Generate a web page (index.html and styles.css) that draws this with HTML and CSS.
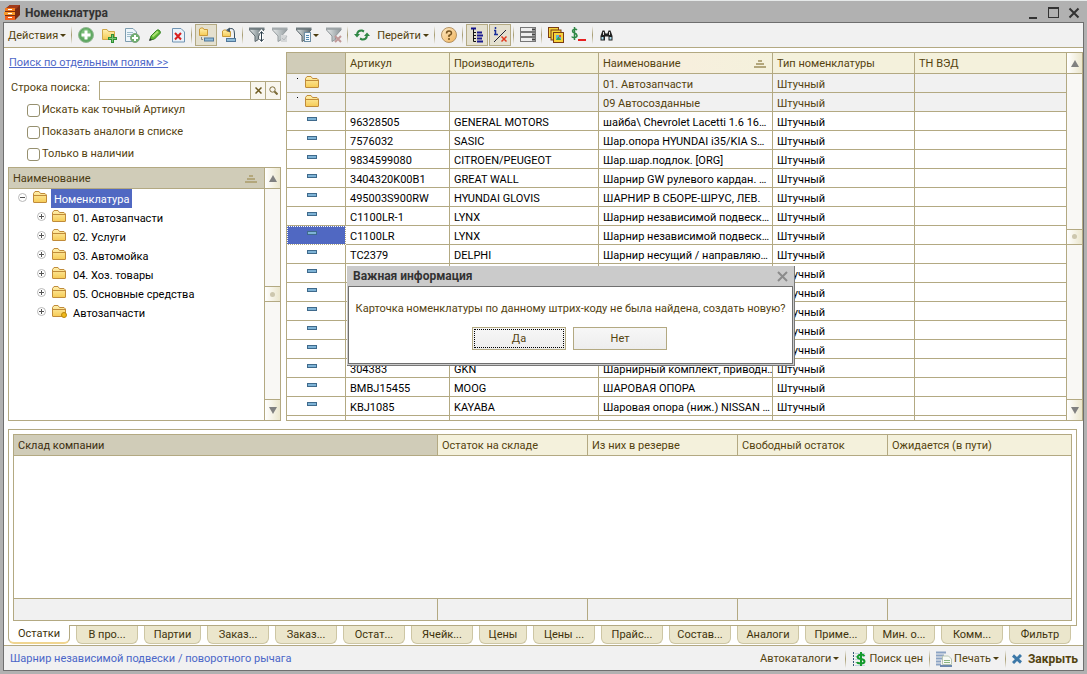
FILE: index.html
```html
<!DOCTYPE html>
<html lang="ru">
<head>
<meta charset="utf-8">
<title>Номенклатура</title>
<link rel="stylesheet" href="styles.css">
</head>
<body>
<svg class="sprite" aria-hidden="true">
  <defs>
    <linearGradient id="gFolder" x1="0" y1="0" x2="0" y2="1"><stop offset="0" stop-color="#fff0ae"/><stop offset="1" stop-color="#f6cb55"/></linearGradient>
    <linearGradient id="gFunnel" x1="0" y1="0" x2="1" y2="0"><stop offset="0" stop-color="#e4e8e8"/><stop offset=".5" stop-color="#9aa5a8"/><stop offset="1" stop-color="#59656a"/></linearGradient>
    <linearGradient id="gHelp" x1="0" y1="0" x2="1" y2="1"><stop offset="0" stop-color="#fdebc8"/><stop offset="1" stop-color="#f0b25a"/></linearGradient>
  </defs>
  <symbol id="folder" viewBox="0 0 16 14"><path d="M1.500 12V3.500L3 1.500H7L8.500 3.500H13L14.500 5V12Q14.500 12.500 14 12.500H2Q1.500 12.500 1.500 12Z" fill="url(#gFolder)" stroke="#c08b3a"/><path d="M1.500 5.500H14" stroke="#c08b3a"/></symbol>
  <symbol id="item" viewBox="0 0 10 5"><rect x=".5" y=".5" width="9" height="3" fill="#7eb3d6" stroke="#3f6a8c"/></symbol>
  <symbol id="plus" viewBox="0 0 9 9"><circle cx="4.500" cy="4.500" r="4" fill="#fff" stroke="#b9b9b9"/><path d="M2 4.500H7M4.500 2V7" stroke="#555"/></symbol>
  <symbol id="minus" viewBox="0 0 9 9"><circle cx="4.500" cy="4.500" r="4" fill="#fff" stroke="#b9b9b9"/><path d="M2 4.500H7" stroke="#555"/></symbol>
  <symbol id="sort" viewBox="0 0 12 8"><path d="M4 1H8M2 4H10M0 7H12" stroke="#b3a77c" stroke-width="2"/></symbol>
  <symbol id="funnel" viewBox="0 0 16 16"><path d="M.5 2V3L6 9V14.500L9.500 12.500V9L15 3V2Z" fill="url(#gFunnel)" stroke="#59656a"/><path d="M0 1.500H15.500" stroke="#717c80" stroke-width="2"/></symbol>
</svg>

<div class="window">
  <header class="titlebar">
    <svg class="app-icon" width="17" height="17" viewBox="0 0 17 17"><path d="M1 5L6 1H16V11L11 16H1Z" fill="#7a2b12"/><path d="M1 5L6 1H16L12 5Z" fill="#a33c1b"/><rect x="1" y="4" width="10" height="3" fill="#f47a1c"/><rect x="0" y="8" width="11" height="3" fill="#f99a2a"/><rect x="1" y="12" width="10" height="4" fill="#f0601a"/><path d="M4 5.500H8M4 9.500H8M4 13.500H8" stroke="#fff"/></svg>
    <h1>Номенклатура</h1>
    <div class="win-buttons">
      <button aria-label="Свернуть"><svg width="12" height="14" viewBox="0 0 12 14"><path d="M1 12H9" stroke="#333" stroke-width="2"/></svg></button>
      <button aria-label="Развернуть"><svg width="12" height="14" viewBox="0 0 12 14"><rect x=".5" y="2.500" width="10" height="9" fill="none" stroke="#333"/><path d="M0 2H11" stroke="#333" stroke-width="2"/></svg></button>
      <button aria-label="Закрыть окно"><svg width="12" height="14" viewBox="0 0 12 14"><path d="M1.500 2.500L10.500 11.500M10.500 2.500L1.500 11.500" stroke="#333" stroke-width="2"/></svg></button>
    </div>
  </header>

  <div class="client">
    <nav class="toolbar">
      <button class="text-btn">Действия<i class="caret"></i></button>
      <i class="sep"></i>
      <button class="icon-btn" aria-label="Добавить"><svg width="16" height="16" viewBox="0 0 16 16"><circle cx="8" cy="8" r="7.500" fill="#5fa862" stroke="#94b894"/><circle cx="8" cy="7" r="5" fill="#7abd78"/><path d="M8 3.500V12.500M3.500 8H12.500" stroke="#fff" stroke-width="3"/></svg></button>
      <button class="icon-btn" aria-label="Новая группа"><svg width="16" height="16" viewBox="0 0 16 16"><path d="M1.500 12.500V2.500H6L7.500 4.500H13.500V12.500Z" fill="url(#gFolder)" stroke="#d0a848"/><path d="M11.500 7V16M7 11.500H16" stroke="#2f8f35" stroke-width="3"/><path d="M11.500 8V15M8 11.500H15" stroke="#79c774"/></svg></button>
      <button class="icon-btn" aria-label="Скопировать"><svg width="16" height="16" viewBox="0 0 16 16"><path d="M1.500 1.500H9L12.500 5V14.500H1.500Z" fill="#eef6fb" stroke="#7d9db0"/><path d="M3 5.500H9M3 7.500H10M3 9.500H8" stroke="#9dbccb"/><circle cx="11" cy="11" r="4.500" fill="#6cb06d" stroke="#82a582"/><path d="M11 8V14M8 11H14" stroke="#fff" stroke-width="2"/></svg></button>
      <button class="icon-btn" aria-label="Изменить"><svg width="16" height="16" viewBox="0 0 16 16"><path d="M3 13L4 9L9.500 3.500Q11 2 12.500 3.500T13 6.500L7.500 12Z" fill="#5fb533" stroke="#33821f"/><path d="M5.500 9.500L11 4.500" stroke="#a9e274" stroke-width="2"/><path d="M2 14L3 11L5 13Z" fill="#333"/></svg></button>
      <button class="icon-btn" aria-label="Удалить"><svg width="16" height="16" viewBox="0 0 16 16"><path d="M2.500 1.500H11L14.500 5V15H2.500Z" fill="#e9f2fa" stroke="#6f93b2"/><path d="M5 6L11 12.500M11 6L5 12.500" stroke="#d92020" stroke-width="2"/></svg></button>
      <i class="sep"></i>
      <button class="icon-btn on" aria-label="Иерархический просмотр"><svg width="16" height="16" viewBox="0 0 16 16"><path d="M1.500 8.500V2L3 1H5L6 2.500H9.500V8.500Z" fill="url(#gFolder)" stroke="#c99a3a"/><rect x="6.500" y="11" width="9" height="3" fill="#8fbcd9" stroke="#52789a"/><path d="M3.500 10V12.500H5" fill="none" stroke="#888"/></svg></button>
      <button class="icon-btn" aria-label="Переместить в группу"><svg width="16" height="16" viewBox="0 0 16 16"><path d="M1.500 9.500V4L3 3H5L6 4.500H9.500V9.500Z" fill="url(#gFolder)" stroke="#c99a3a"/><path d="M7 2.500Q13.500 -1 13.500 7V11" fill="none" stroke="#394f5f"/><path d="M5 3L9 .5V5.500Z" fill="#455b6a"/><rect x="5.500" y="11.500" width="9" height="3" fill="#8fbcd9" stroke="#52789a"/></svg></button>
      <i class="sep"></i>
      <button class="icon-btn" aria-label="Отбор и сортировка"><svg width="16" height="16" viewBox="0 0 16 16"><use href="#funnel" width="16" height="16"/><path d="M12.500 5V14M10.500 7L12.500 4.500L14.500 7M10.500 12L12.500 14.500L14.500 12" fill="none" stroke="#fff" stroke-width="3"/><path d="M12.500 5V14M10.500 7L12.500 4.500L14.500 7M10.500 12L12.500 14.500L14.500 12" fill="none" stroke="#2d3f4c"/></svg></button>
      <button class="icon-btn" aria-label="Отбор по значению"><svg width="16" height="16" viewBox="0 0 16 16" opacity=".6"><use href="#funnel" width="16" height="16"/><rect x="9" y="8" width="6" height="7" fill="#c3c7c8"/><path d="M10 11L12 13L15 9" fill="none" stroke="#8f9699"/></svg></button>
      <button class="icon-btn wide" aria-label="История отборов"><svg width="16" height="16" viewBox="0 0 16 16"><use href="#funnel" width="16" height="16"/><rect x="8.500" y="5.500" width="6" height="9" fill="#f3f8fb" stroke="#6d8ea4"/><path d="M10 8.500H13M10 10.500H13M10 12.500H13" stroke="#4f88b0"/></svg><i class="caret"></i></button>
      <button class="icon-btn" aria-label="Отключить отбор"><svg width="16" height="16" viewBox="0 0 16 16" opacity=".65"><use href="#funnel" width="16" height="16"/><path d="M9 9L15 15M15 9L9 15" stroke="#a76a6a" stroke-width="2"/></svg></button>
      <i class="sep"></i>
      <button class="icon-btn" aria-label="Обновить"><svg width="16" height="16" viewBox="0 0 16 16"><path d="M3 7Q4 3 8 3.500L10 4.500M13 9Q12 13 8 12.500L6 11.500" fill="none" stroke="#2f8745" stroke-width="2"/><path d="M0 7H6L3 10.500ZM10 9H16L13 5.500Z" fill="#2f8745"/></svg></button>
      <button class="text-btn">Перейти<i class="caret"></i></button>
      <i class="sep"></i>
      <button class="icon-btn" aria-label="Справка"><svg width="16" height="16" viewBox="0 0 16 16"><circle cx="8" cy="8" r="7.500" fill="url(#gHelp)" stroke="#b39264"/><path d="M5.500 6.500Q5.500 4 8 4T10.500 6.200Q10.500 7.500 8 8.500V10M8 11V13" fill="none" stroke="#74511d" stroke-width="1.500"/></svg></button>
      <i class="sep"></i>
      <button class="icon-btn on" aria-label="Дерево групп"><svg width="16" height="16" viewBox="0 0 16 16"><path d="M4.500 2V14.500M4.500 5.500H7M4.500 8.500H7M4.500 11.500H7M4.500 14.500H7" fill="none" stroke="#111"/><path d="M2 1.500H7" stroke="#11118a" stroke-width="2"/><path d="M8 5.500H13M8 8.500H14M8 11.500H13M8 14.500H14" stroke="#1a1a90" stroke-width="2"/></svg></button>
      <button class="icon-btn on" aria-label="Информация"><svg width="16" height="16" viewBox="0 0 16 16"><path d="M3.500 0V2M2 3.500H4M3.500 3V7M2 7.500H6" stroke="#1a2f9a" stroke-width="1.500"/><path d="M2 15L14 3" stroke="#223" /><path d="M9.500 9.500L14.500 14.500M14.500 9.500L9.500 14.500" stroke="#e03a20" stroke-width="1.500"/></svg></button>
      <i class="sep"></i>
      <button class="icon-btn" aria-label="Список полей"><svg width="16" height="16" viewBox="0 0 16 16"><g fill="#eee" stroke="#777"><rect x=".5" y=".5" width="15" height="4"/><rect x=".5" y="5.500" width="15" height="4"/><rect x=".5" y="10.500" width="15" height="4"/></g><path d="M12 2.500H15M12 7.500H15M12 12.500H15" stroke="#444" stroke-width="2"/></svg></button>
      <i class="sep"></i>
      <button class="icon-btn" aria-label="Изображения"><svg width="16" height="16" viewBox="0 0 16 16"><g fill="#f5d33b" stroke="#7a3c12"><rect x=".5" y=".5" width="10" height="10"/><rect x="3" y="3" width="10" height="10"/><rect x="5.500" y="5.500" width="10" height="10"/></g><rect x="8" y="8" width="5" height="5" fill="#58b6d8"/><path d="M8 13L10.500 9.500L13 13Z" fill="#3a9f4d"/><rect x="11" y="8" width="2" height="2" fill="#e05030"/></svg></button>
      <button class="icon-btn" aria-label="Цены"><svg width="16" height="16" viewBox="0 0 16 16"><path d="M6 3Q5 2 3.500 2T1.500 4Q1.500 5.500 3.500 6T6 8.500Q6 10.500 3.500 10.500T1 9.500M3.500 0V13" fill="none" stroke="#2f8745" stroke-width="1.500"/><path d="M7 13H15" stroke="#e82020" stroke-width="2"/></svg></button>
      <i class="sep"></i>
      <button class="icon-btn" aria-label="Найти"><svg width="13" height="11" viewBox="0 0 13 11"><path d="M2.500 .5H4.500L5.500 3.500H7.500L8.500 .5H10.500L12.500 6V10.500H8.500V6.500H5V10.500H.5V6Z" fill="#222"/><path d="M1.500 7H3.500V9.500H1.500ZM9.500 7H11.500V9.500H9.500Z" fill="#a9dcee"/><path d="M3.500 2V5M9.500 2V5" stroke="#ddd"/></svg></button>
    </nav>

    <main class="upper">
      <aside class="side">
        <a class="field-link" href="#">Поиск по отдельным полям &gt;&gt;</a>
        <div class="search-row">
          <label for="q">Строка поиска:</label>
          <div class="search-box">
            <input id="q" type="text">
            <button aria-label="Очистить"><svg width="7" height="7" viewBox="0 0 7 7"><path d="M.5 .5L6.500 6.500M6.500 .5L.5 6.500" stroke="#6d5a20" stroke-width="1.500"/></svg></button>
            <button aria-label="Искать"><svg width="9" height="9" viewBox="0 0 9 9"><circle cx="3.500" cy="3.500" r="2.700" fill="none" stroke="#7d6c38"/><path d="M5.500 5.500L8.500 8.500" stroke="#7d6c38" stroke-width="2"/></svg></button>
          </div>
        </div>
        <div class="checks">
          <label><input type="checkbox">Искать как точный Артикул</label>
          <label><input type="checkbox">Показать аналоги в списке</label>
          <label><input type="checkbox">Только в наличии</label>
        </div>
        <section class="tree-box">
          <div class="tree-pane">
            <div class="tree-head">Наименование<svg width="12" height="8"><use href="#sort"/></svg></div>
            <ul class="tree">
              <li class="root"><svg class="exp" width="9" height="9"><use href="#minus"/></svg><svg class="fold" width="16" height="14"><use href="#folder"/></svg><span class="sel">Номенклатура</span></li>
              <li><svg class="exp" width="9" height="9"><use href="#plus"/></svg><svg class="fold" width="16" height="14"><use href="#folder"/></svg><span>01. Автозапчасти</span></li>
              <li><svg class="exp" width="9" height="9"><use href="#plus"/></svg><svg class="fold" width="16" height="14"><use href="#folder"/></svg><span>02. Услуги</span></li>
              <li><svg class="exp" width="9" height="9"><use href="#plus"/></svg><svg class="fold" width="16" height="14"><use href="#folder"/></svg><span>03. Автомойка</span></li>
              <li><svg class="exp" width="9" height="9"><use href="#plus"/></svg><svg class="fold" width="16" height="14"><use href="#folder"/></svg><span>04. Хоз. товары</span></li>
              <li><svg class="exp" width="9" height="9"><use href="#plus"/></svg><svg class="fold" width="16" height="14"><use href="#folder"/></svg><span>05. Основные средства</span></li>
              <li><svg class="exp" width="9" height="9"><use href="#plus"/></svg><svg class="fold" width="16" height="14" viewBox="0 0 16 14"><use href="#folder" width="16" height="14"/><circle cx="13" cy="11" r="2.500" fill="#f0b818" stroke="#b8860b"/></svg><span>Автозапчасти</span></li>
            </ul>
          </div>
          <div class="scroll">
            <button class="up" aria-label="Вверх"></button>
            <div class="track"><i class="thumb"></i></div>
            <button class="down" aria-label="Вниз"></button>
          </div>
        </section>
      </aside>

      <section class="list-box">
        <div class="list-pane">
          <table class="list">
            <colgroup><col class="c-icon"><col class="c-art"><col class="c-brand"><col class="c-name"><col class="c-type"><col></colgroup>
            <thead><tr><th class="dark"></th><th>Артикул</th><th>Производитель</th><th class="sorted"><div>Наименование<svg width="12" height="8"><use href="#sort"/></svg></div></th><th>Тип номенклатуры</th><th>ТН ВЭД</th></tr></thead>
            <tbody>
              <tr class="group"><td class="ic"><svg width="16" height="14"><use href="#folder"/></svg></td><td></td><td></td><td>01. Автозапчасти</td><td>Штучный</td><td></td></tr>
              <tr class="group"><td class="ic"><svg width="16" height="14"><use href="#folder"/></svg></td><td></td><td></td><td>09 Автосозданные</td><td>Штучный</td><td></td></tr>
              <tr><td class="ic"><svg width="10" height="5"><use href="#item"/></svg></td><td>96328505</td><td>GENERAL MOTORS</td><td>шайба\ Chevrolet Lacetti 1.6 16…</td><td>Штучный</td><td></td></tr>
              <tr><td class="ic"><svg width="10" height="5"><use href="#item"/></svg></td><td>7576032</td><td>SASIC</td><td>Шар.опора HYUNDAI i35/KIA S…</td><td>Штучный</td><td></td></tr>
              <tr><td class="ic"><svg width="10" height="5"><use href="#item"/></svg></td><td>9834599080</td><td>CITROEN/PEUGEOT</td><td>Шар.шар.подлок. [ORG]</td><td>Штучный</td><td></td></tr>
              <tr><td class="ic"><svg width="10" height="5"><use href="#item"/></svg></td><td>3404320K00B1</td><td>GREAT WALL</td><td>Шарнир GW рулевого кардан. …</td><td>Штучный</td><td></td></tr>
              <tr><td class="ic"><svg width="10" height="5"><use href="#item"/></svg></td><td>495003S900RW</td><td>HYUNDAI GLOVIS</td><td>ШАРНИР В СБОРЕ-ШРУС, ЛЕВ.</td><td>Штучный</td><td></td></tr>
              <tr><td class="ic"><svg width="10" height="5"><use href="#item"/></svg></td><td>C1100LR-1</td><td>LYNX</td><td>Шарнир независимой подвеск…</td><td>Штучный</td><td></td></tr>
              <tr><td class="ic current"><svg width="10" height="5"><use href="#item"/></svg></td><td>C1100LR</td><td>LYNX</td><td>Шарнир независимой подвеск…</td><td>Штучный</td><td></td></tr>
              <tr><td class="ic"><svg width="10" height="5"><use href="#item"/></svg></td><td>TC2379</td><td>DELPHI</td><td>Шарнир несущий / направляю…</td><td>Штучный</td><td></td></tr>
              <tr><td class="ic"><svg width="10" height="5"><use href="#item"/></svg></td><td></td><td></td><td></td><td>Штучный</td><td></td></tr>
              <tr><td class="ic"><svg width="10" height="5"><use href="#item"/></svg></td><td></td><td></td><td></td><td>Штучный</td><td></td></tr>
              <tr><td class="ic"><svg width="10" height="5"><use href="#item"/></svg></td><td></td><td></td><td></td><td>Штучный</td><td></td></tr>
              <tr><td class="ic"><svg width="10" height="5"><use href="#item"/></svg></td><td></td><td></td><td></td><td>Штучный</td><td></td></tr>
              <tr><td class="ic"><svg width="10" height="5"><use href="#item"/></svg></td><td></td><td></td><td></td><td>Штучный</td><td></td></tr>
              <tr><td class="ic"><svg width="10" height="5"><use href="#item"/></svg></td><td>304383</td><td>GKN</td><td>Шарнирный комплект, приводн…</td><td>Штучный</td><td></td></tr>
              <tr><td class="ic"><svg width="10" height="5"><use href="#item"/></svg></td><td>BMBJ15455</td><td>MOOG</td><td>ШАРОВАЯ ОПОРА</td><td>Штучный</td><td></td></tr>
              <tr><td class="ic"><svg width="10" height="5"><use href="#item"/></svg></td><td>KBJ1085</td><td>KAYABA</td><td>Шаровая опора (ниж.) NISSAN …</td><td>Штучный</td><td></td></tr>
              <tr><td></td><td></td><td></td><td></td><td></td><td></td></tr>
            </tbody>
          </table>
        </div>
        <div class="scroll">
          <button class="up" aria-label="Вверх"></button>
          <div class="track"><i class="thumb"></i></div>
          <button class="down" aria-label="Вниз"></button>
        </div>
      </section>
    </main>

    <section class="lower">
      <table class="stock">
        <colgroup><col><col class="c-sum"><col class="c-sum"><col class="c-sum"><col class="c-last"></colgroup>
        <thead><tr><th class="dark">Склад компании</th><th>Остаток на складе</th><th>Из них в резерве</th><th>Свободный остаток</th><th>Ожидается (в пути)</th></tr></thead>
        <tbody><tr><td colspan="5"></td></tr></tbody>
        <tfoot><tr><td></td><td></td><td></td><td></td><td></td></tr></tfoot>
      </table>
    </section>
    <div class="tabs" role="tablist">
      <button role="tab" class="active">Остатки</button><button role="tab">В про...</button><button role="tab" class="mid">Партии</button><button role="tab">Заказ...</button><button role="tab">Заказ...</button><button role="tab">Остат...</button><button role="tab">Ячейк...</button><button role="tab" class="short">Цены</button><button role="tab">Цены ...</button><button role="tab">Прайс...</button><button role="tab">Состав...</button><button role="tab">Аналоги</button><button role="tab">Приме...</button><button role="tab">Мин. о...</button><button role="tab">Комм...</button><button role="tab">Фильтр</button>
    </div>

    <footer class="status">
      <a href="#">Шарнир независимой подвески / поворотного рычага</a>
      <div class="commands">
        <button>Автокаталоги<i class="caret"></i></button>
        <i class="sep"></i>
        <button><svg width="15" height="16" viewBox="0 0 15 16"><path d="M1.500 1V16" stroke="#345a78" stroke-dasharray="2 1"/><path d="M3 2.500H13M3 5.500H13M3 8.500H13M3 11.500H13M3 14.500H13" stroke="#c2d4de"/><path d="M12.500 5Q11.500 3.500 9 3.500T5.500 5.700Q5.500 7.500 9 8T12.500 10.500Q12.500 12.500 9 12.500T5 11M9 1V15" fill="none" stroke="#129a2c" stroke-width="2"/></svg>Поиск цен</button>
        <i class="sep"></i>
        <button><svg width="16" height="16" viewBox="0 0 16 16"><path d="M0 1.500H10M0 4.500H8M0 7.500H6M0 10.500H5M0 13.500H5" stroke="#8ba3c4" stroke-width="2"/><path d="M6.500 5V13.500H15.500V8L12.500 5Z" fill="#f7faf5" stroke="#b9c6b3"/><path d="M8 9.500H14M8 11.500H14" stroke="#8bb581"/><path d="M4 15H16" stroke="#6b88ae" stroke-width="2"/></svg>Печать<i class="caret"></i></button>
        <i class="sep"></i>
        <button class="close"><svg width="10" height="10" viewBox="0 0 10 10"><path d="M1 1.500L9 8.500M9 1L1 9" stroke="#3c78a8" stroke-width="3"/></svg>Закрыть</button>
      </div>
    </footer>
  </div>

  <div class="dialog" role="dialog" aria-labelledby="dlg-title">
    <div class="dialog-head"><h2 id="dlg-title">Важная информация</h2><button aria-label="Закрыть сообщение"><svg width="11" height="11" viewBox="0 0 11 11"><path d="M1 1L10 10M10 1L1 10" stroke="#8b8b8b" stroke-width="2"/></svg></button></div>
    <div class="dialog-body">
      <p>Карточка номенклатуры по данному штрих-коду не была найдена, создать новую?</p>
      <div class="dialog-actions"><button class="focused">Да</button><button>Нет</button></div>
    </div>
  </div>
</div>
</body>
</html>
```
FILE: styles.css
```css
:root {
  --line: #b3a982;
  --ink: #54430f;
  --head: #f4f1dc;
  --dark: #d0ccb8;
  --panel: #f1f1f1;
  --blue: #5068c2;
}
* { box-sizing: border-box; }
body {
  margin: 0;
  font: 11px/14px Roboto, "Liberation Sans", sans-serif;
  color: var(--ink);
}
button, input { font: inherit; color: inherit; }
button { border: 0; padding: 0; background: none; white-space: nowrap; }
svg { flex: none; display: block; }
.sprite { position: absolute; width: 0; height: 0; }

.window {
  position: relative;
  display: flex;
  flex-direction: column;
  height: 100vh;
  min-height: 560px;
  padding: 0 3px 3px;
  background: #b1b1b1;
  border-top: 1px solid #e6e9e9;
  overflow: hidden;
}
.titlebar { display: flex; align-items: center; height: 21px; padding: 2px 4px 0 1px; }
.titlebar h1 { margin: 0 auto 0 4px; font-size: 12px; line-height: 16px; color: #333; }
.win-buttons { display: flex; gap: 8px; }
.client {
  flex: 1;
  min-height: 0;
  display: flex;
  flex-direction: column;
  background: #fff;
  border: 1px solid #6f6f6f;
}

/* Command bar */
.toolbar {
  display: flex;
  align-items: center;
  gap: 1px;
  height: 25px;
  flex: none;
  padding-left: 1px;
  background: var(--panel);
  border-bottom: 1px solid var(--line);
}
.text-btn { display: flex; align-items: center; gap: 2px; height: 22px; padding: 1px 3px 0; }
.icon-btn { display: flex; align-items: center; justify-content: center; width: 22px; height: 22px; }
.icon-btn.wide { width: 30px; gap: 1px; }
.icon-btn.on { background: #e4e0cf; border: 1px solid var(--line); }
.caret { width: 0; height: 0; border: 3px solid transparent; border-top-color: #4c3d10; border-bottom: 0; }
.sep { width: 1px; height: 18px; margin: 0 2px 0 1px; background: linear-gradient(#f1f1f1, #a79c70, #f1f1f1); }

/* Search, group tree and item list */
.upper { flex: 369 1 0; min-height: 0; display: flex; gap: 5px; padding: 4px 0 0 4px; }
.side { flex: none; width: 273px; display: flex; flex-direction: column; }
.field-link { margin: 4px 0 0 1px; color: #5068c8; align-self: flex-start; }
.search-row { display: flex; padding: 11px 0 0 3px; }
.search-row label { width: 88px; }
.search-box { display: flex; flex: 1; height: 19px; border: 1px solid var(--line); }
.search-box input { flex: 1; min-width: 0; border: 0; padding: 0 3px; outline: 0; }
.search-box button { display: flex; align-items: center; justify-content: center; width: 15px; border-left: 1px solid var(--line); background: #f8f6ee; }
.checks { display: flex; flex-direction: column; gap: 8px; padding: 3px 0 6px 19px; }
.checks label { display: flex; align-items: center; gap: 2px; }
.checks input { appearance: none; width: 13px; height: 13px; margin: 0; border: 1px solid #96906f; border-radius: 3px; background: #fff; }

.tree-box { flex: 1; min-height: 0; display: flex; border: 1px solid var(--line); }
.tree-pane { flex: 1; min-width: 0; overflow: hidden; }
.tree-head { display: flex; align-items: center; justify-content: space-between; height: 21px; padding: 1px 7px 0 4px; background: var(--dark); border-bottom: 1px solid var(--line); color: #4a3a12; }
.tree { list-style: none; margin: 0; padding: 0; color: #000; }
.tree li { display: flex; height: 19px; padding-left: 28px; }
.tree li.root { padding-left: 9px; color: #fff; }
.tree .exp { margin-top: 4px; }
.tree .fold { margin: 1px 2px 0 5px; }
.tree span { padding: 4px 3px 0; height: 19px; margin-left: 1px; }
.tree .sel { background: var(--blue); }

.scroll { flex: none; width: 16px; display: flex; flex-direction: column; border-left: 1px solid var(--line); background: #f9f8f5; }
.scroll button { flex: none; display: flex; align-items: center; justify-content: center; height: 21px; background: linear-gradient(90deg, #fff, #ebe6cd); }
.scroll .up { border-bottom: 1px solid var(--line); }
.scroll .down { border-top: 1px solid var(--line); }
.scroll .up::before, .scroll .down::before { content: ""; border: 4px solid transparent; border-bottom: 7px solid #808080; border-top: 0; }
.scroll .down::before { border-top: 7px solid #808080; border-bottom: 0; }
.track { flex: 1; display: flex; flex-direction: column; justify-content: center; }
.thumb { display: flex; align-items: center; justify-content: center; height: 16px; border: solid var(--line); border-width: 1px 0; background: linear-gradient(90deg, #fff, #ebe6cd); }
.thumb::before { content: ""; width: 5px; height: 5px; border-radius: 50%; background: #cdc7ae; }

.list-box { flex: 1; min-width: 0; display: flex; border: 1px solid var(--line); }
.list-pane { flex: 1; min-width: 0; overflow: hidden; }
table { width: 100%; table-layout: fixed; border-collapse: separate; border-spacing: 0; }
th { height: 21px; padding: 1px 3px 0 4px; font-weight: 400; text-align: left; background: var(--head); }
th, td { border: solid var(--line); border-width: 0 1px 1px 0; white-space: nowrap; overflow: hidden; }
tr > :last-child { border-right: 0; }
th.dark { background: var(--dark); color: #3c2e10; }
th.sorted { background: linear-gradient(90deg, #f7efe0, #f7efdd, #f4f1dc); }
th.sorted div { display: flex; align-items: center; justify-content: space-between; margin-right: 3px; }
.list td { height: 19px; padding: 3px 0 0 4px; line-height: 14px; color: #000; }
.list .group td { background: var(--panel); color: var(--ink); }
.list td.ic { padding: 0; vertical-align: top; }
.ic svg { margin: 5px auto 0 20px; }
.list .group .ic { background-image: linear-gradient(#000, #000); background-size: 1px 1px; background-repeat: no-repeat; background-position: 10px 4px; }
.group .ic svg { margin: 1px auto 0 17px; }
.list .ic.current { background: var(--blue); outline: 1px dotted #fff; outline-offset: -1px; }
.c-icon { width: 59px; }
.c-art { width: 104px; }
.c-brand { width: 149px; }
.c-name { width: 174px; }
.c-type { width: 142px; }

/* Stock panel and its tabs */
.lower { flex: 187 1 0; min-height: 0; margin: 8px 6px 0 4px; padding: 4px; border: 1px solid var(--line); }
.stock { height: 100%; border: 1px solid var(--line); }
.stock tbody td { height: 100%; border-right: 0; }
.stock tfoot td { height: 21px; background: var(--panel); border-bottom: 0; }
.c-sum { width: 150px; }
.c-last { width: 183px; }

.tabs { flex: none; display: flex; gap: 6px; height: 20px; padding: 0 12px 0 4px; border-bottom: 1px solid var(--line); }
.tabs button { flex: 0 1 62px; height: 18px; color: #40330c; background: #ebe6cc; border: 1px solid #cdc6a4; border-top: 0; border-radius: 0 0 6px 6px; }
.tabs .mid { flex-basis: 57px; }
.tabs .short { flex-basis: 48px; }
.tabs .active { height: 19px; margin-top: -1px; background: #fff; border-color: var(--line); border-bottom: 2px solid #f0d590; }

.status { flex: none; display: flex; justify-content: space-between; align-items: center; height: 24px; padding: 1px 5px 0 6px; background: var(--panel); }
.status a { color: #4a66c8; text-decoration: none; }
.commands { display: flex; align-items: center; gap: 4px; }
.commands button { display: flex; align-items: center; gap: 2px; }
.commands .sep { margin: 0 2px; }
.commands .close { gap: 6px; font-size: 12px; font-weight: 700; }

/* Question window */
.dialog { position: absolute; left: 347px; top: 265px; width: 448px; padding: 0 1px 1px; background: #cbcbcb; border-right: 1px solid #777; border-bottom: 1px solid #777; }
.dialog-head { display: flex; justify-content: space-between; align-items: center; height: 20px; padding: 0 5px; }
.dialog-head h2 { margin: 0; font-size: 12px; line-height: 16px; color: #333; }
.dialog-body { background: #fff; border: 1px solid #6f6f6f; padding: 15px 0 13px; text-align: center; }
.dialog-body p { margin: 0 0 11px; white-space: nowrap; }
.dialog-actions { display: flex; justify-content: center; gap: 7px; margin-right: 2px; }
.dialog-actions button { width: 94px; height: 23px; border: 1px solid var(--line); background: linear-gradient(#f7f7f7, #ededed); }
.dialog-actions .focused { outline: 1px dotted #000; outline-offset: -3px; }
```
